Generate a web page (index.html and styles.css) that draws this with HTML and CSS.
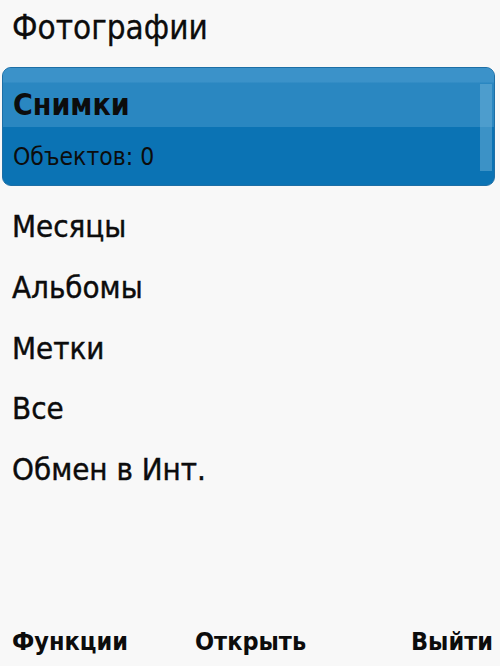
FILE: index.html
```html
<!DOCTYPE html>
<html lang="ru">
<head>
<meta charset="utf-8">
<title>Фотографии</title>
<link rel="stylesheet" href="styles.css">
</head>
<body>
<div class="screen">
  <div class="title">Фотографии</div>
  <div class="selected">
    <div class="sel-top">Снимки</div>
    <div class="sel-bottom">Объектов: 0</div>
    <div class="scroll"></div>
  </div>
  <ul class="menu">
    <li>Месяцы</li>
    <li>Альбомы</li>
    <li>Метки</li>
    <li>Все</li>
    <li>Обмен в Инт.</li>
  </ul>
  <div class="softkeys">
    <span class="sk left">Функции</span>
    <span class="sk mid">Открыть</span>
    <span class="sk right">Выйти</span>
  </div>
</div>
</body>
</html>
```
FILE: styles.css
```css
html, body {
  margin: 0;
  padding: 0;
}
body {
  background: #f7f7f7;
  font-family: "DejaVu Sans Condensed", "DejaVu Sans", sans-serif;
  font-stretch: condensed;
  color: #0c0c0c;
}
.screen {
  width: 500px;
  height: 666px;
  display: flex;
  flex-direction: column;
  background: #f8f8f8;
}
.title {
  font-size: 33px;
  line-height: 40px;
  padding: 8px 0 0 12px;
  height: 51px;
  box-sizing: border-box;
  margin-bottom: 16px;
  -webkit-text-stroke: 0.3px #0c0c0c;
}
.selected {
  position: relative;
  margin: 0 5px 0 2px;
  height: 119px;
  border-radius: 9px;
  border: 1px solid #1d6fa6;
  box-sizing: border-box;
  background: #0b73b4;
  overflow: hidden;
  display: flex;
  flex-direction: column;
  box-shadow: inset 0 2px 0 #5aa8d6;
}
.sel-top {
  height: 59px;
  box-sizing: border-box;
  background: linear-gradient(#3b92c9 0, #3b92c9 14px, #2a87c1 15px, #2a87c1 100%);
  font-weight: bold;
  font-size: 30px;
  line-height: 36px;
  padding: 19px 0 0 10px;
}
.sel-bottom {
  flex: 1;
  font-size: 24.5px;
  line-height: 30px;
  padding: 15px 0 0 10px;
}
.scroll {
  position: absolute;
  right: 2px;
  top: 16px;
  width: 12px;
  height: 87px;
  background: rgba(120, 185, 220, 0.45);
}
.menu {
  list-style: none;
  margin: 0;
  padding: 10px 0 0 12px;
}
.menu li {
  font-size: 31px;
  height: 60.75px;
  line-height: 60.75px;
  -webkit-text-stroke: 0.4px #0c0c0c;
}
.softkeys {
  margin-top: auto;
  display: grid;
  grid-template-columns: 183px 1fr auto;
  align-items: baseline;
  padding: 0 7px 9px 12px;
  font-weight: bold;
  font-size: 25px;
  line-height: 30px;
}
```
